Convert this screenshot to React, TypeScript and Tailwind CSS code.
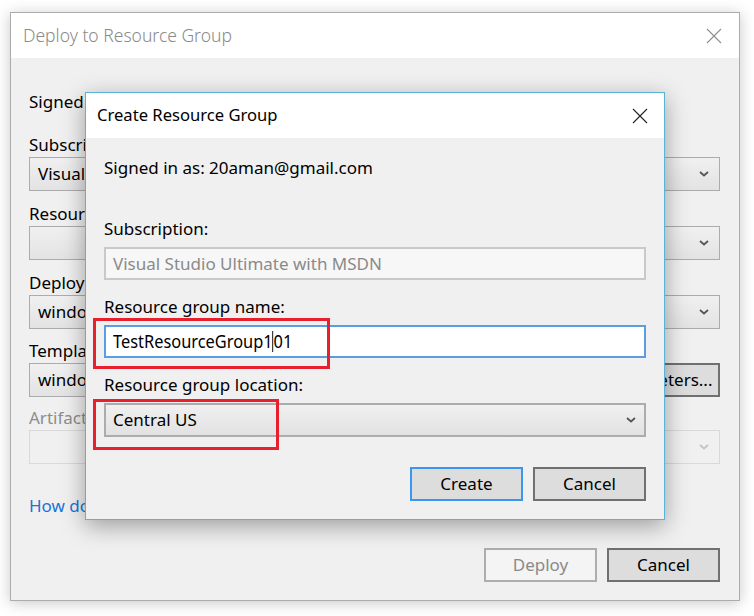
import * as React from 'react';

const font = { fontFamily: '"Noto Sans", "Open Sans", sans-serif' };

function Chevron(props: { className?: string }) {
  return (
    <svg className={props.className} width="10" height="6" viewBox="0 0 10 6" fill="none">
      <path d="M1 1l4 3.5L9 1" stroke="currentColor" strokeWidth="1.8" />
    </svg>
  );
}

function CloseX(props: { className?: string }) {
  return (
    <svg className={props.className} width="16" height="16" viewBox="0 0 16 16" fill="none">
      <path d="M1 1l14 14M15 1L1 15" stroke="currentColor" strokeWidth="1.1" />
    </svg>
  );
}

function BackCombo(props: { text?: string; disabled?: boolean }) {
  if (props.disabled) {
    return (
      <div className="h-[34px] border border-[#d9d9d9] bg-[#f0f0f0] flex items-center justify-end pr-[10px]">
        <Chevron className="text-[#c4c4c4]" />
      </div>
    );
  }
  return (
    <div className="h-[34px] border border-[#acacac] bg-gradient-to-b from-[#f0f0f0] to-[#e3e3e3] flex items-center justify-between pl-[8px] pr-[10px]">
      <span className="text-[17px] text-black whitespace-nowrap">{props.text ?? ''}</span>
      <Chevron className="text-[#555]" />
    </div>
  );
}

function BackLabel(props: { children: React.ReactNode; muted?: boolean }) {
  return (
    <div className={`h-[22px] leading-[22px] text-[17px] whitespace-nowrap ${props.muted ? 'text-[#8d8d8d]' : 'text-black'}`}>
      {props.children}
    </div>
  );
}

function CreateDialog() {
  return (
    <div className="absolute left-[85px] top-[92px] w-[580px] h-[428px] border border-[#5db0d6] bg-[#f0f0f0] shadow-[0_6px_22px_rgba(0,0,0,0.35)]">
      <div className="h-[45px] bg-white flex items-center justify-between pl-[11px] pr-[16px]">
        <span className="text-[16.6px] text-black">Create Resource Group</span>
        <CloseX className="text-[#222]" />
      </div>
      <div className="flex flex-col px-[18px] pt-[19px]">
        <div className="h-[22px] leading-[22px] text-[17px] text-black">Signed in as: 20aman@gmail.com</div>

        <div className="mt-[39px] h-[22px] leading-[22px] text-[17px] text-black">Subscription:</div>
        <div className="mt-[7px] h-[33px] border-2 border-[#c9c9cd] bg-[#f7f7f7] flex items-center pl-[7px] text-[17px] text-[#8a8a8a]">
          Visual Studio Ultimate with MSDN
        </div>

        <div className="mt-[16px] h-[22px] leading-[22px] text-[17px] text-black">Resource group name:</div>
        <div className="mt-[7px] h-[33px] border-2 border-[#5a9de0] bg-white flex items-center pl-[7px] text-black">
          <div className="flex items-center text-[18px] scale-x-[0.91] origin-left whitespace-nowrap">
            <span>TestResourceGroup1</span>
            <span className="w-px h-[21px] bg-black" />
            <span>01</span>
          </div>
        </div>

        <div className="mt-[16px] h-[22px] leading-[22px] text-[17px] text-black">Resource group location:</div>
        <div className="mt-[7px] h-[34px] border-2 border-[#acacac] bg-gradient-to-b from-[#f0f0f0] to-[#e2e2e2] flex items-center justify-between pl-[7px] pr-[8px] text-[17px] text-black">
          <span>Central US</span>
          <Chevron className="text-[#555]" />
        </div>

        <div className="mt-[30px] flex justify-end gap-[10px]">
          <button className="w-[113px] h-[34px] border-2 border-[#3c96f0] bg-[#dddddd] text-[17px] text-black">Create</button>
          <button className="w-[113px] h-[34px] border-2 border-[#707070] bg-[#dddddd] text-[17px] text-black">Cancel</button>
        </div>
      </div>

      <div className="absolute left-[7px] top-[225px] w-[237px] h-[51px] border-[3px] border-[#e8202e]" />
      <div className="absolute left-[7px] top-[306px] w-[186px] h-[51px] border-[3px] border-[#e8202e]" />
    </div>
  );
}

export default function App() {
  return (
    <div className="relative w-[754px] h-[616px] bg-white overflow-hidden" style={font}>
      <div className="ml-[10px] mt-[12px] w-[730px] h-[589px] border border-[#acacac] bg-[#f0f0f0] flex flex-col shadow-[0_2px_14px_rgba(0,0,0,0.22)]">
        <div className="h-[45px] bg-white flex items-center justify-between pl-[12px] pr-[17px]">
          <span className="text-[17.5px] text-[#8a8a8a] font-light">Deploy to Resource Group</span>
          <CloseX className="text-[#8f8f8f]" />
        </div>
        <div className="flex-1 flex flex-col pl-[18px] pr-[19px] pt-[33px]">
          <BackLabel>Signed in as: 20aman@gmail.com</BackLabel>

          <div className="mt-[21px]"><BackLabel>Subscription:</BackLabel></div>
          <div className="mt-[1px]"><BackCombo text="Visual Studio Ultimate with MSDN" /></div>

          <div className="mt-[12px]"><BackLabel>Resource group:</BackLabel></div>
          <div className="mt-[1px]"><BackCombo /></div>

          <div className="mt-[12px]"><BackLabel>Deployment template:</BackLabel></div>
          <div className="mt-[1px]"><BackCombo text="windowsvirtualmachine.json" /></div>

          <div className="mt-[11px]"><BackLabel>Template parameters file:</BackLabel></div>
          <div className="mt-[1px] flex gap-[8px]">
            <div className="flex-1 h-[34px] border border-[#acacac] bg-gradient-to-b from-[#f0f0f0] to-[#e3e3e3] flex items-center pl-[8px] text-[17px] text-black whitespace-nowrap overflow-hidden">
              windowsvirtualmachine.parameters.json
            </div>
            <button className="w-[156px] h-[34px] border-2 border-[#707070] bg-[#dddddd] text-[17px] text-black whitespace-nowrap">Edit Parameters...</button>
          </div>

          <div className="mt-[10px]"><BackLabel muted>Artifact storage account:</BackLabel></div>
          <div className="mt-[1px]"><BackCombo disabled /></div>

          <div className="mt-[31px] h-[22px] leading-[22px] text-[17px] text-[#1a73d9] whitespace-nowrap">How do I configure the deployment?</div>

          <div className="mt-[31px] flex justify-end gap-[10px]">
            <button className="w-[113px] h-[34px] border-2 border-[#adadad] bg-[#f4f4f4] text-[17px] text-[#8a8a8a]">Deploy</button>
            <button className="w-[113px] h-[34px] border-2 border-[#707070] bg-[#dddddd] text-[17px] text-black">Cancel</button>
          </div>
        </div>
      </div>
      <CreateDialog />
    </div>
  );
}
